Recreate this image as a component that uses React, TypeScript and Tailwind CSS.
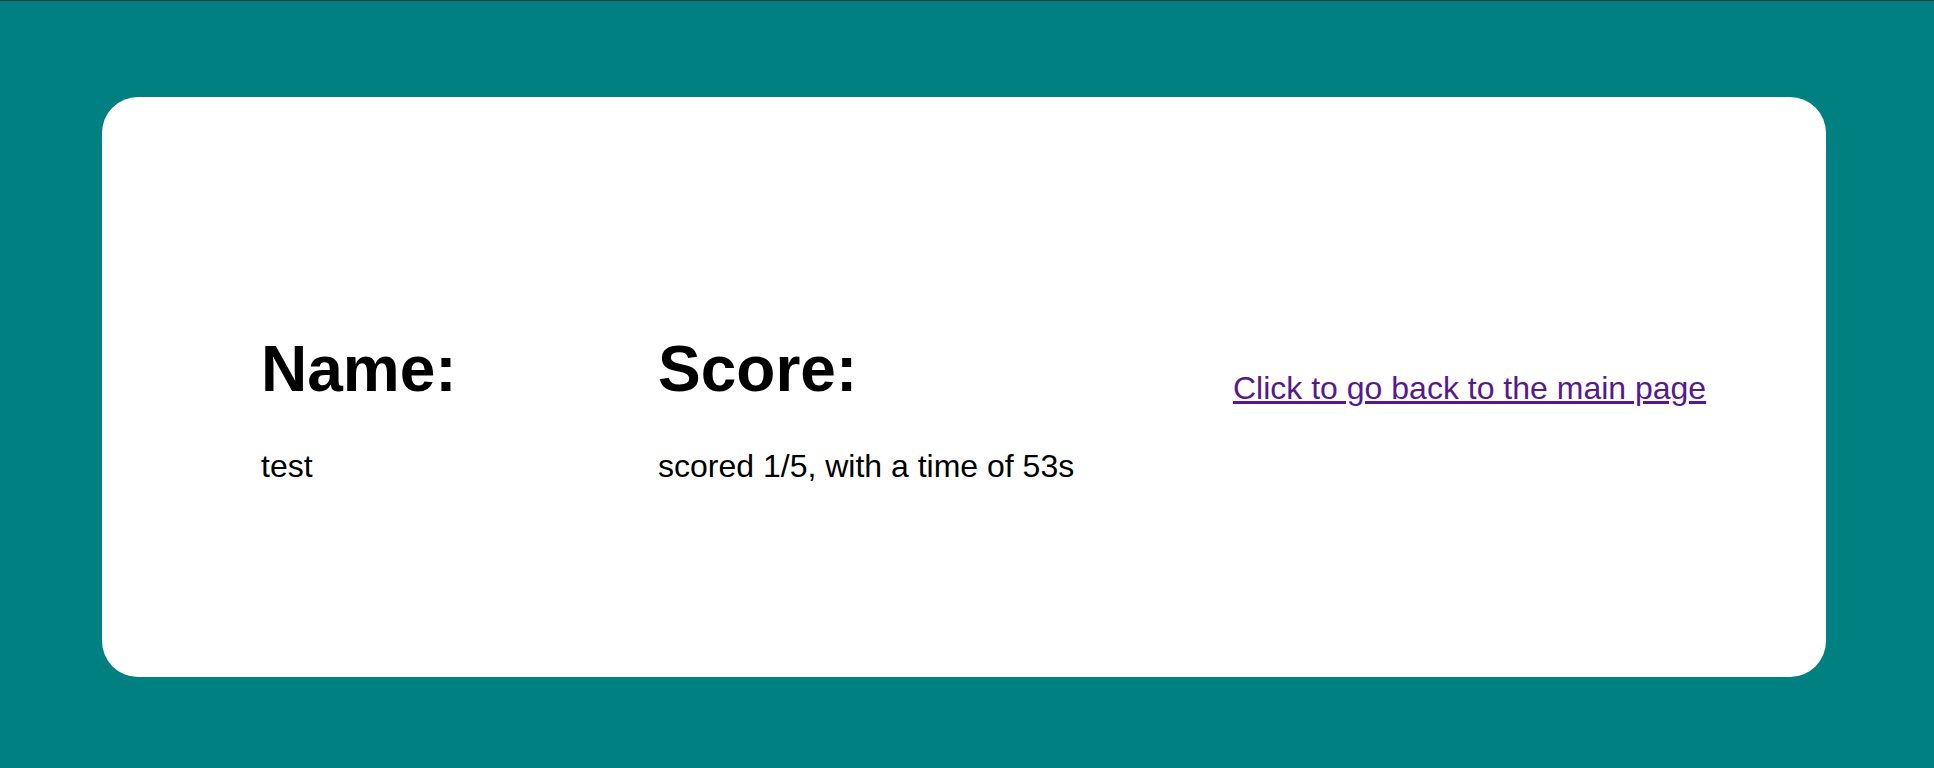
const results = {
  name: "test",
  score: 1,
  total: 5,
  time: 53,
};

export default function App() {
  return (
    <div className="min-h-[768px] w-full bg-[#008080] font-['Liberation_Sans',Arial,sans-serif] text-black">
      <div className="h-px bg-[#2e3b3b]" />
      <div className="pt-[96px] pl-[102px]">
        <div className="w-[1724px] h-[580px] rounded-[36px] bg-white pl-[159px] pt-[235px]">
          <div className="flex">
            <div className="w-[397px] shrink-0">
              <h1 className="text-[64px] leading-[74px] font-bold">Name:</h1>
              <p className="mt-[42px] text-[32px] leading-[37px]">{results.name}</p>
            </div>
            <div className="w-[575px] shrink-0">
              <h1 className="text-[64px] leading-[74px] font-bold">Score:</h1>
              <p className="mt-[42px] text-[32px] leading-[37px]">
                scored {results.score}/{results.total}, with a time of {results.time}s
              </p>
            </div>
            <div className="pt-[38px]">
              <a href="#" className="text-[32px] leading-[37px] text-[#551a8b] underline">
                Click to go back to the main page
              </a>
            </div>
          </div>
        </div>
      </div>
    </div>
  );
}
